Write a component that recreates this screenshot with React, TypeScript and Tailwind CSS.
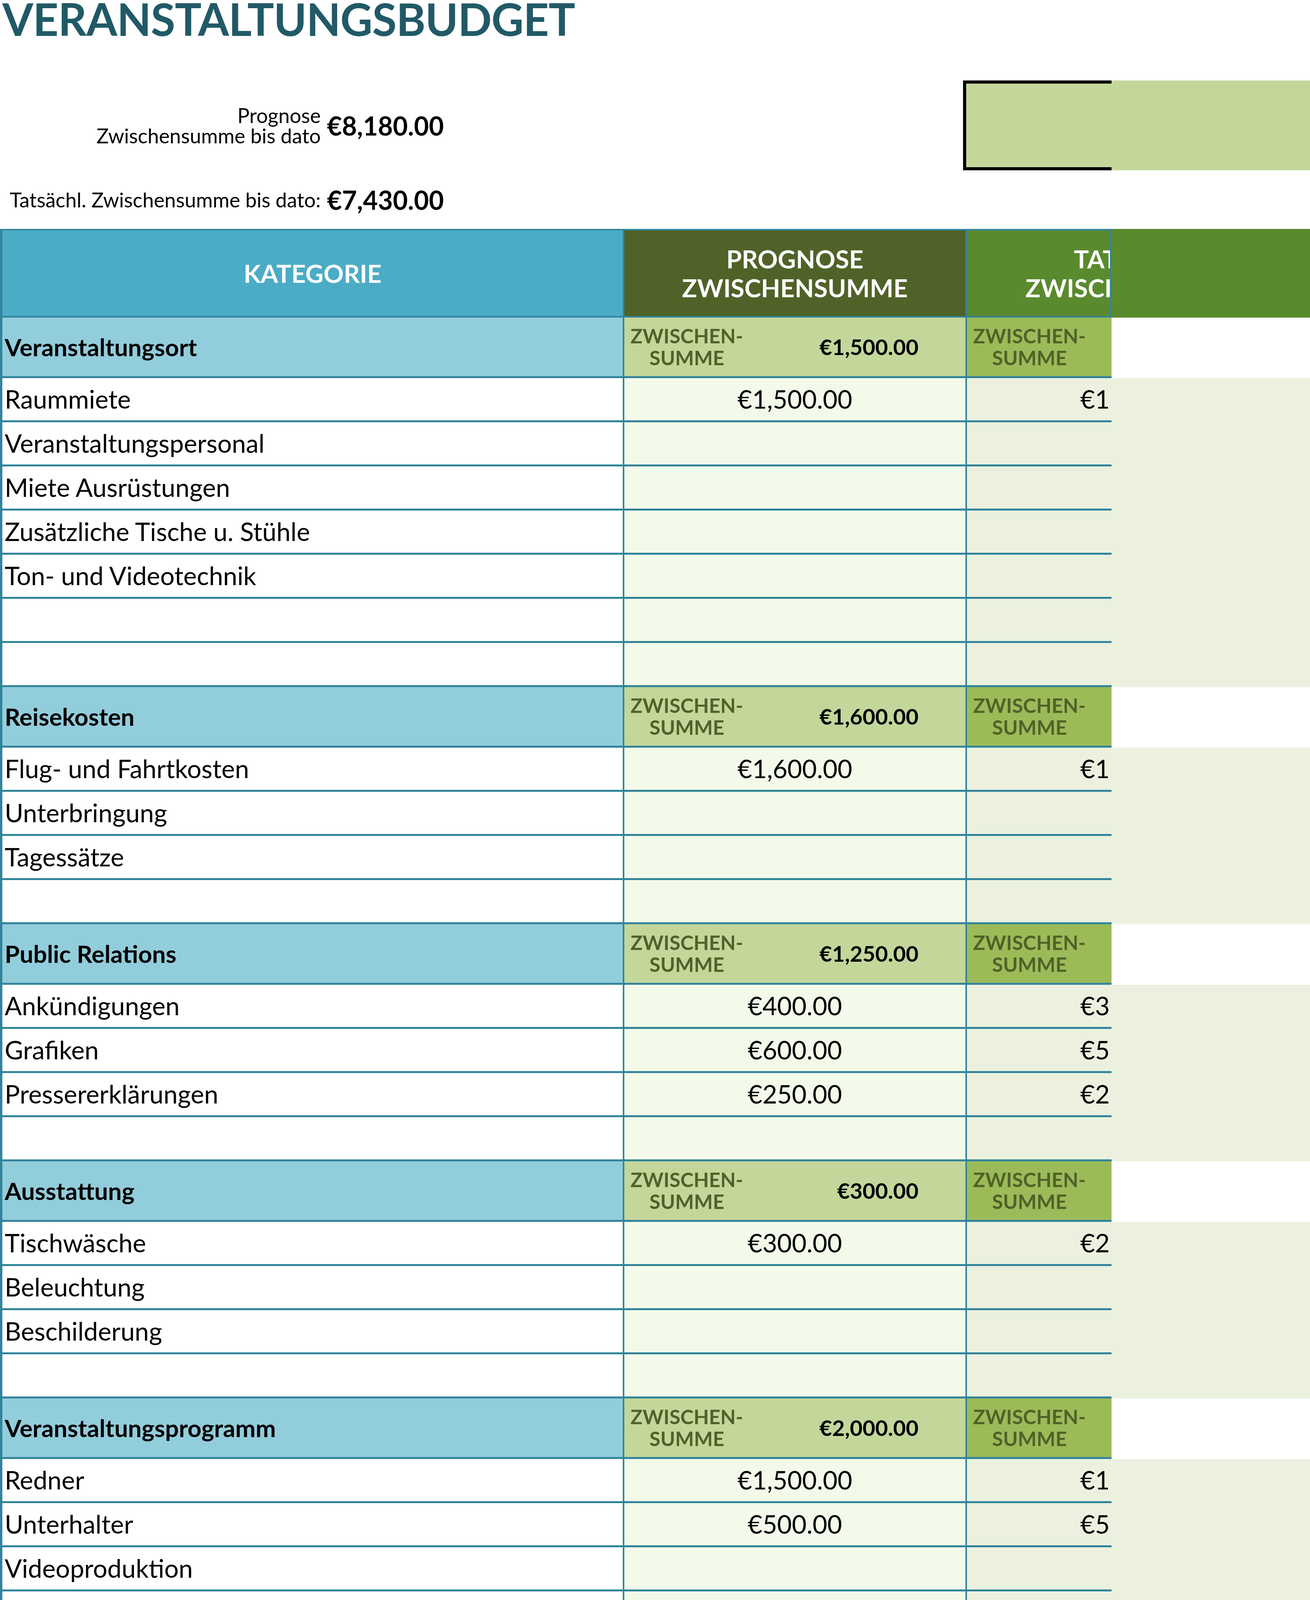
import React from "react";

type Sec = { name: string; f: string; items: [string, string, string][] };
const secs: Sec[] = [
  { name: "Veranstaltungsort", f: "€1,500.00", items: [["Raummiete", "€1,500.00", "€1"], ["Veranstaltungspersonal", "", ""], ["Miete Ausrüstungen", "", ""], ["Zusätzliche Tische u. Stühle", "", ""], ["Ton- und Videotechnik", "", ""], ["", "", ""], ["", "", ""]] },
  { name: "Reisekosten", f: "€1,600.00", items: [["Flug- und Fahrtkosten", "€1,600.00", "€1"], ["Unterbringung", "", ""], ["Tagessätze", "", ""], ["", "", ""]] },
  { name: "Public Relations", f: "€1,250.00", items: [["Ankündigungen", "€400.00", "€3"], ["Grafiken", "€600.00", "€5"], ["Pressererklärungen", "€250.00", "€2"], ["", "", ""]] },
  { name: "Ausstattung", f: "€300.00", items: [["Tischwäsche", "€300.00", "€2"], ["Beleuchtung", "", ""], ["Beschilderung", "", ""], ["", "", ""]] },
  { name: "Veranstaltungsprogramm", f: "€2,000.00", items: [["Redner", "€1,500.00", "€1"], ["Unterhalter", "€500.00", "€5"], ["Videoproduktion", "", ""], ["Präsentationsgestaltung", "", ""]] },
];

const Sub = () => (
  <div className="text-[51px] leading-[56px] font-bold text-[#4f6228] text-center w-[300px]">ZWISCHEN-<br />SUMME</div>
);

export default function App() {
  return (
    <div className="w-[3353px] h-[4192px] bg-white text-black overflow-hidden" style={{ fontFamily: "Lato, 'Liberation Sans', sans-serif" }}>
      <div className="h-[206px] pl-[6px]">
        <div className="text-[114px] leading-[96px] font-bold text-[#215967] tracking-[-1px]">VERANSTALTUNGSBUDGET</div>
      </div>
      <div className="flex h-[230px]">
        <div className="w-[2465px] flex items-center">
          <div className="w-[821px] text-right text-[52px] leading-[52px]">Prognose<br />Zwischensumme bis dato</div>
          <div className="ml-[16px] text-[66px] font-bold">€8,180.00</div>
        </div>
        <div className="w-[380px] bg-[#c4d79b] border-[8px] border-r-0 border-black"></div>
        <div className="flex-1 bg-[#c4d79b]"></div>
      </div>
      <div className="h-[150px] flex items-center">
        <div className="w-[821px] text-right text-[52px] whitespace-nowrap">Tatsächl. Zwischensumme bis dato:</div>
        <div className="ml-[16px] text-[66px] font-bold">€7,430.00</div>
      </div>
      <div className="flex h-[227px]">
        <div className="w-[2845px] flex border-[4px] border-[#31849b] border-l-[6px]">
          <div className="w-[1588px] bg-[#4bacc6] flex items-center justify-center text-white font-bold text-[64px]">KATEGORIE</div>
          <div className="w-[877px] bg-[#4f6228] border-l-[4px] border-[#31849b] flex items-center justify-center text-white font-bold text-[64px] leading-[74px] text-center">PROGNOSE<br />ZWISCHENSUMME</div>
          <div className="flex-1 bg-[#5a8a2e] border-l-[4px] border-[#31849b] overflow-hidden">
            <div className="w-[877px] h-full flex items-center justify-center text-white font-bold text-[64px] leading-[74px] text-center">TATSÄCHL.<br />ZWISCHENSUMME</div>
          </div>
        </div>
        <div className="flex-1 bg-[#5a8a2e]"></div>
      </div>
      {secs.map((s) => (
        <div key={s.name}>
          <div className="flex h-[155px]">
            <div className="w-[2845px] flex border-b-[5px] border-l-[6px] border-[#31849b]">
              <div className="w-[1588px] bg-[#92cddc] flex items-center pl-[6px] font-bold text-[62px]">{s.name}</div>
              <div className="w-[877px] bg-[#c4d79b] border-l-[4px] border-[#31849b] flex items-center pl-[10px] pr-[120px] justify-between">
                <Sub />
                <div className="font-bold text-[56px]">{s.f}</div>
              </div>
              <div className="flex-1 bg-[#9bbb59] border-l-[4px] border-[#31849b] flex items-center pl-[10px] overflow-hidden"><Sub /></div>
            </div>
            <div className="flex-1 bg-white"></div>
          </div>
          {s.items.map((it, i) => (
            <div key={i} className="flex h-[113px]">
              <div className="w-[2845px] flex border-b-[5px] border-l-[6px] border-[#31849b]">
                <div className="w-[1588px] bg-white flex items-center pl-[6px] text-[65px]">{it[0]}</div>
                <div className="w-[877px] bg-[#f3fae9] border-l-[4px] border-[#31849b] flex items-center justify-center text-[65px]">{it[1]}</div>
                <div className="flex-1 bg-[#ebf1de] border-l-[4px] border-[#31849b] overflow-hidden">
                  <div className="w-[877px] h-full flex items-center pl-[290px] text-[65px]">{it[2]}</div>
                </div>
              </div>
              <div className="flex-1 bg-[#ebf1de]"></div>
            </div>
          ))}
        </div>
      ))}
    </div>
  );
}
